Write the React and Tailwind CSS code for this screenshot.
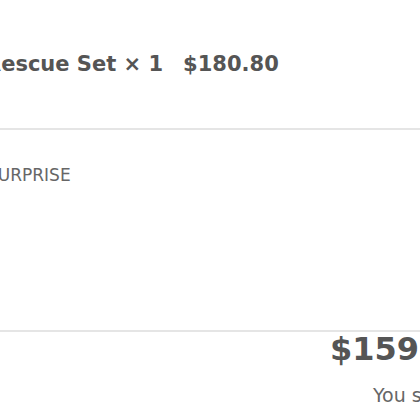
import React from 'react';

const App = () => {
  return (
    <div className="w-[420px] h-[420px] overflow-hidden bg-white font-['DejaVu_Sans',Verdana,sans-serif]">
      {/* ITEM ROW */}
      <div className="h-[130px] border-b-2 border-[#e5e5e5] pt-[52px]">
        <div className="flex items-baseline gap-[20px] -ml-[15px] whitespace-nowrap text-[#555]">
          <span className="text-[21px] leading-[24px] font-bold">Rescue Set × 1</span>
          <span className="text-[21px] leading-[24px] font-bold">$180.80</span>
        </div>
      </div>

      {/* DISCOUNT CODE */}
      <div className="h-[200px] pt-[33px]">
        <div className="-ml-[13px] whitespace-nowrap text-[17px] leading-[24px] text-[#666]">SURPRISE</div>
      </div>

      {/* TOTAL */}
      <div className="border-t-2 border-[#e5e5e5]">
        <div className="pl-[330px] whitespace-nowrap text-[32px] leading-[34px] font-bold text-[#555]">$159.20</div>
        <div className="pl-[373px] pt-[17px] whitespace-nowrap text-[19px] leading-[24px] text-[#666]">You save $21.60</div>
      </div>
    </div>
  );
};

export default App;
